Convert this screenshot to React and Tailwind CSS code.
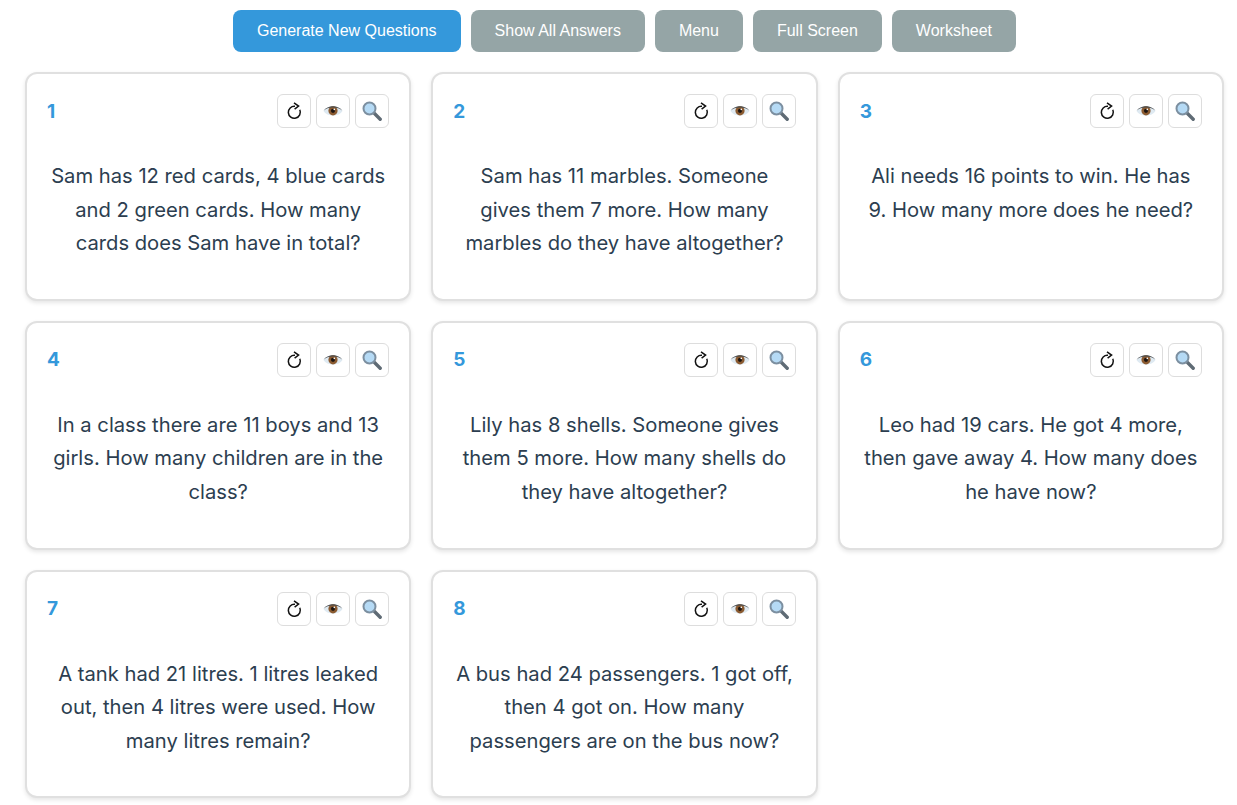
const questions = [
  "Sam has 12 red cards, 4 blue cards and 2 green cards. How many cards does Sam have in total?",
  "Sam has 11 marbles. Someone gives them 7 more. How many marbles do they have altogether?",
  "Ali needs 16 points to win. He has 9. How many more does he need?",
  "In a class there are 11 boys and 13 girls. How many children are in the class?",
  "Lily has 8 shells. Someone gives them 5 more. How many shells do they have altogether?",
  "Leo had 19 cars. He got 4 more, then gave away 4. How many does he have now?",
  "A tank had 21 litres. 1 litres leaked out, then 4 litres were used. How many litres remain?",
  "A bus had 24 passengers. 1 got off, then 4 got on. How many passengers are on the bus now?",
];

const RefreshIcon = () => (
  <svg width="16" height="18" viewBox="0 0 16 18" fill="none" stroke="#111" strokeWidth="1.5">
    <path d="M9 4.3 A6 6 0 1 0 13.8 7.8" />
    <path d="M8 0.8 L12.6 4.1 L8.6 7.2" strokeWidth="1.5" />
  </svg>
);

const EyeIcon = () => (
  <svg width="20" height="14" viewBox="0 0 20 14">
    <path d="M0.5 7 C4 0.8 16 0.8 19.5 7 C16 13.2 4 13.2 0.5 7 Z" fill="#dfeaf2" />
    <circle cx="10" cy="6.8" r="4.6" fill="#8a5a30" />
    <circle cx="10" cy="6.8" r="2.1" fill="#1c1410" />
    <circle cx="11.3" cy="5.4" r="0.8" fill="#fff" />
    <path d="M0.6 6.8 C4.5 0.6 15.5 0.6 19.4 6.8 C15 2.4 5 2.4 0.6 6.8 Z" fill="#4e4e4e" />
  </svg>
);

const SearchIcon = () => (
  <svg width="20" height="20" viewBox="0 0 20 20">
    <path d="M12.5 12.5 L18.2 18.2" stroke="#5f6b75" strokeWidth="3.4" strokeLinecap="round" />
    <circle cx="7.5" cy="7.5" r="6" fill="#b5daf5" stroke="#7c8fa0" strokeWidth="2" />
  </svg>
);

const IconButton = ({ children, label }) => (
  <button
    aria-label={label}
    className="flex h-[34px] w-[34px] items-center justify-center rounded-md border border-[#dddddd] bg-white"
  >
    {children}
  </button>
);

const QuestionCard = ({ number, text }) => (
  <div className="h-[228.8px] rounded-xl border-2 border-[#e0e0e0] bg-white p-5 shadow-[0_2px_4px_rgba(0,0,0,0.1)]">
    <div className="flex items-center justify-between">
      <span className="pt-[1.6px] text-[19px] font-bold text-[#3498db]">{number}</span>
      <div className="flex gap-[5px]">
        <IconButton label="Refresh"><RefreshIcon /></IconButton>
        <IconButton label="Show answer"><EyeIcon /></IconButton>
        <IconButton label="Zoom"><SearchIcon /></IconButton>
      </div>
    </div>
    <p className="mt-[31.1px] text-center text-[20.2px] leading-[33.6px] text-[#2c3e50]">{text}</p>
  </div>
);

const ToolbarButton = ({ children, primary }) => (
  <button
    className={
      primary
        ? "h-[42px] rounded-lg bg-[#3498db] px-6 font-['Liberation_Sans',sans-serif] text-base text-white"
        : "h-[42px] rounded-lg bg-[#95a5a6] px-6 font-['Liberation_Sans',sans-serif] text-base text-white"
    }
  >
    {children}
  </button>
);

export default function App() {
  return (
    <div className="min-h-screen bg-white pt-[10px] pr-[13px] pl-[25px] font-['Inter',sans-serif]">
      <div className="flex justify-center gap-[10px]">
        <ToolbarButton primary>Generate New Questions</ToolbarButton>
        <ToolbarButton>Show All Answers</ToolbarButton>
        <ToolbarButton>Menu</ToolbarButton>
        <ToolbarButton>Full Screen</ToolbarButton>
        <ToolbarButton>Worksheet</ToolbarButton>
      </div>
      <div className="mt-5 grid grid-cols-3 gap-5">
        {questions.map((text, i) => (
          <QuestionCard key={i} number={i + 1} text={text} />
        ))}
      </div>
    </div>
  );
}
